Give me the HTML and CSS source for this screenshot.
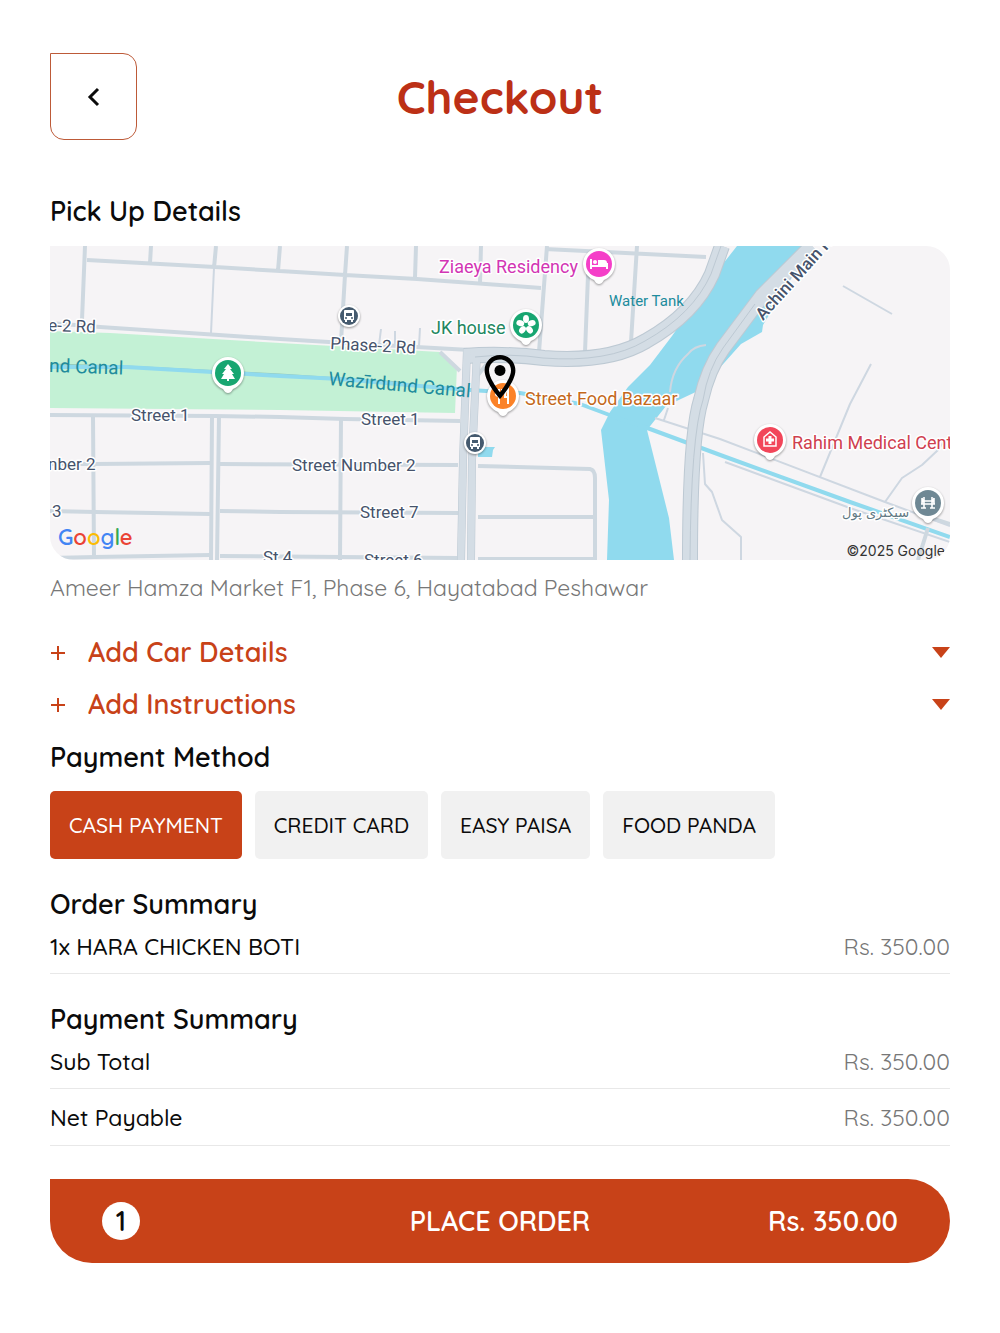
FILE: index.html
```
<!DOCTYPE html>
<html lang="en">
<head>
    <meta charset="UTF-8">
    <meta name="viewport" content="width=device-width, initial-scale=1.0">
    <title>Checkout</title>
    <link rel="stylesheet" href="styles.css">
</head>
<body>

    <header class="header">
        <button class="back-btn" type="button" aria-label="Back">
            <svg width="14" height="20" viewBox="0 0 14 20"><path d="M11 2L3 10l8 8"/></svg>
        </button>
        <h1>Checkout</h1>
    </header>

    <main>
        <section class="pickup">
            <h2>Pick Up Details</h2>

            <svg class="map" viewBox="50 246 900 314" role="img" aria-label="Pick up location">
                <defs>
                    <path id="pin" d="M0 20c-2 0-3-1-5-4-2-1-11-5-11-16a16 16 0 0 1 32 0c0 11-9 15-11 16-2 3-3 4-5 4z"/>
                    <g id="bus">
                        <circle class="marker" r="11"/>
                        <circle r="9" fill="#455a6e"/>
                        <path d="M-5-5q0-1 1-1h8q1 0 1 1v9h-1v2h-2v-2h-4v2h-2v-2h-1z" fill="#fff"/>
                        <path d="M-3-3h6v3h-6z" fill="#455a6e"/>
                        <circle cx="-3" cy="2" r="1" fill="#455a6e"/>
                        <circle cx="3" cy="2" r="1" fill="#455a6e"/>
                    </g>
                </defs>

                <!-- land and water -->
                <path class="land" d="M50 246h900v314H50z"/>
                <path class="park" d="M50 331l60 2 170 10 160 9 17 14-2 47-175-3-230-2z"/>
                <path class="water" d="M737 246h74l-48 79-1 7-21 12-41 46-34 16-19 24 22 88 5 42h-67l2-60-8-70 9-18 18-25 22-22 22-29 43-62z"/>
                <path class="water" d="M478 447h17l-2 3-1 7h-14z"/>
                <path class="canal-edge" d="M50 364l76 2 154 8 120 8"/>
                <path class="canal" d="M50 367h76l154 9 60 3 80 7 50 4 50 3 60 11 35 13 35 12 73 27 127 46 100 35"/>
                <path class="lane" d="M725 462l125 46 100 34"/>

                <!-- streets -->
                <g class="street">
                    <path d="M85 246l-3 74M87 260l128 7 65 4 65 4 72 4 124 9M151 246l-1 17M216 246l-2 22M280 246l-2 25M347 246l-2 29-4 67M416 246l-1 32M481 246l-1 37"/>
                    <path d="M547 246l-8 106M545 249l161 8M589 250l-4 102M637 246l-6 96"/>
                    <path d="M50 323l50 4 180 12 65 4 125 7"/>
                    <path d="M50 415l165 1 65 1 65 2 115 2M50 464h44l116-1M220 464l238 1M50 511l45 1 115 2M220 511l60 1 178 1M50 558l45-1 115-2M220 556l238 2"/>
                    <path d="M93 416l1 142M212 416l-1 144M219 416l-2 144M341 418l-1 142"/>
                    <path d="M478 466l112 3q5 1 5 9v82M478 517h117M478 559h117"/>
                    <path d="M925 516l25 8M928 528l-10 32M440 352l20 19M494 355l-16 20"/>
                </g>
                <g class="lane">
                    <path d="M214 268l-3 65M381 329l-2 16M395 331v16M420 328l-1 18"/>
                    <path d="M843 286l49 28M871 364l-21 40-30 73M655 418l65 21 165 63 65 24M668 408l-4 12M885 502l17-24 20-13 16-15 7-10"/>
                    <path d="M703 453l2 31 7 8 10 28 19 17v23M706 345q-12 1-18 9-16 14-18 38"/>
                </g>

                <!-- main roads -->
                <g class="road-edge">
                    <path d="M464 356q40-3 80 2 65 5 102-17 48-27 66-67l10-28"/>
                    <path d="M467 350l-4 110-2 100M477 352l-5 108-1 100"/>
                    <path d="M812 246l-50 50-39 52q-15 21-22 52-11 35-11 160"/>
                </g>
                <g class="road">
                    <path d="M464 356q40-3 80 2 65 5 102-17 48-27 66-67l10-28"/>
                    <path d="M467 350l-4 110-2 100M477 352l-5 108-1 100"/>
                    <path d="M812 246l-50 50-39 52q-15 21-22 52-11 35-11 160"/>
                </g>
                <path class="divider" d="M475 357q36-4 68 1 65 5 102-17 48-27 66-67l10-28M755 304l-32 44q-15 21-20 52-12 35-13 160"/>

                <!-- street names -->
                <g class="street-name">
                    <text x="48" y="331" transform="rotate(2 48 331)">e-2 Rd</text>
                    <text x="330" y="349" transform="rotate(3 330 349)">Phase-2 Rd</text>
                    <text x="131" y="421">Street 1</text>
                    <text x="361" y="425">Street 1</text>
                    <text x="292" y="471">Street Number 2</text>
                    <text x="48" y="470">nber 2</text>
                    <text x="52" y="517">3</text>
                    <text x="360" y="518">Street 7</text>
                    <text x="263" y="563">St 4</text>
                    <text x="364" y="566">Street 6</text>
                    <text class="main" x="763" y="321" transform="rotate(-48 763 321)">Achini Main Rd</text>
                </g>
                <g class="water-name">
                    <text x="49" y="372" transform="rotate(2 49 372)">nd Canal</text>
                    <text x="328" y="385" transform="rotate(5 328 385)">Wazīrdund Canal</text>
                    <text class="small" x="609" y="306">Water Tank</text>
                </g>

                <!-- places -->
                <g class="place-name">
                    <text x="439" y="273" fill="#d235b4">Ziaeya Residency</text>
                    <text x="431" y="334" fill="#22875f">JK house</text>
                    <text x="525" y="405" fill="#c4691c">Street Food Bazaar</text>
                    <text x="792" y="449" fill="#cf404f">Rahim Medical Center</text>
                    <text class="urdu" x="842" y="517" fill="#607883">سیکٹری پول</text>
                </g>

                <g transform="translate(228 373)">
                    <use class="marker" href="#pin"/>
                    <circle r="13" fill="#18a671"/>
                    <path d="M0-9l4 5h-2l4 5h-2l3 5h-6v2h-2v-2h-6l3-5h-2l4-5h-2z" fill="#fff"/>
                </g>
                <g transform="translate(526 325)">
                    <use class="marker" href="#pin"/>
                    <circle r="13" fill="#18a671"/>
                    <g fill="#fff">
                        <ellipse cy="-6" rx="3" ry="4"/>
                        <ellipse cy="-6" rx="3" ry="4" transform="rotate(72)"/>
                        <ellipse cy="-6" rx="3" ry="4" transform="rotate(144)"/>
                        <ellipse cy="-6" rx="3" ry="4" transform="rotate(216)"/>
                        <ellipse cy="-6" rx="3" ry="4" transform="rotate(288)"/>
                    </g>
                </g>
                <g transform="translate(599 264)">
                    <use class="marker" href="#pin"/>
                    <circle r="13" fill="#f53fc8"/>
                    <path d="M-8-5v10M-8 2h16M8 5v-6" stroke="#fff" stroke-width="2" fill="none"/>
                    <circle cx="-4" cy="-2" r="2" fill="#fff"/>
                    <path d="M-1-4h6q3 0 3 3v2h-9z" fill="#fff"/>
                </g>
                <g transform="translate(770 440)">
                    <use class="marker" href="#pin"/>
                    <circle r="13" fill="#f2465a"/>
                    <path d="M-6 6v-9l6-5 6 5v9z" stroke="#fff" stroke-width="1.5" fill="none"/>
                    <path d="M0-4v8M-4 0h8" stroke="#fff" stroke-width="3"/>
                </g>
                <g transform="translate(928 503)">
                    <use class="marker" href="#pin"/>
                    <circle r="13" fill="#6f8894"/>
                    <path d="M-4-6v11M4-6v11M-7 1h14M-7 5h5M2 5h5M-6-5q1 4 2 4M6-5q-1 4-2 4M-4-2h8M-6-5v6M6-5v6" stroke="#fff" stroke-width="1.6" fill="none"/>
                </g>
                <g transform="translate(503 396)">
                    <use class="marker" href="#pin"/>
                    <circle r="13" fill="#fb8228"/>
                    <path d="M-4-7v15M-7-7v5q0 2 3 2t3-2v-5M5 8v-15q-3 2-3 8h3" stroke="#fff" stroke-width="2" fill="none"/>
                </g>
                <use href="#bus" x="349" y="316"/>
                <use href="#bus" x="475" y="443"/>

                <!-- selected location -->
                <g transform="translate(473.6 350.6) scale(2.2)">
                    <path d="M12 2C8.1 2 5 5.1 5 9c0 5.3 7 13 7 13s7-7.7 7-13c0-3.9-3.1-7-7-7zM7 9c0-2.800 2.200-5 5-5s5 2.200 5 5c0 2.900-2.900 7.200-5 9.900C9.900 16.200 7 11.900 7 9z"/>
                    <circle cx="12" cy="9" r="2.500"/>
                </g>

                <text class="logo" x="58" y="545"><tspan fill="#4285f4">G</tspan><tspan fill="#ea4335">o</tspan><tspan fill="#fbbc05">o</tspan><tspan fill="#4285f4">g</tspan><tspan fill="#34a853">l</tspan><tspan fill="#ea4335">e</tspan></text>
                <text class="copyright" x="945" y="556">©2025 Google</text>
            </svg>

            <p class="address">Ameer Hamza Market F1, Phase 6, Hayatabad Peshawar</p>
        </section>

        <section class="extras">
            <button class="toggle" type="button" aria-expanded="false">
                <svg class="plus" width="16" height="16" viewBox="0 0 16 16"><path d="M8 2v14M1 9h14"/></svg>
                <span>Add Car Details</span>
                <svg class="caret" width="18" height="11" viewBox="0 0 18 11"><path d="M0 0h18L9 11z"/></svg>
            </button>
            <button class="toggle" type="button" aria-expanded="false">
                <svg class="plus" width="16" height="16" viewBox="0 0 16 16"><path d="M8 2v14M1 9h14"/></svg>
                <span>Add Instructions</span>
                <svg class="caret" width="18" height="11" viewBox="0 0 18 11"><path d="M0 0h18L9 11z"/></svg>
            </button>
        </section>

        <section class="payment">
            <h2>Payment Method</h2>
            <div class="methods">
                <button class="method active" type="button">CASH PAYMENT</button>
                <button class="method" type="button">CREDIT CARD</button>
                <button class="method" type="button">EASY PAISA</button>
                <button class="method" type="button">FOOD PANDA</button>
            </div>
        </section>

        <section class="summary">
            <h2>Order Summary</h2>
            <div class="row"><span>1x HARA CHICKEN BOTI</span><span class="price">Rs. 350.00</span></div>
        </section>

        <section class="summary">
            <h2>Payment Summary</h2>
            <div class="row"><span>Sub Total</span><span class="price">Rs. 350.00</span></div>
            <div class="row"><span>Net Payable</span><span class="price">Rs. 350.00</span></div>
        </section>

        <button class="place-order" type="button">
            <span class="count">1</span>
            <span>PLACE ORDER</span>
            <span class="total">Rs. 350.00</span>
        </button>
    </main>

</body>
</html>
```
FILE: styles.css
```
* {
    box-sizing: border-box;
}
body {
    font-family: Quicksand, Lato, sans-serif;
    margin: 0;
    padding: 53px 50px 70px;
    background-color: #fff;
    color: #0b0b0b;
}
button {
    font-family: inherit;
    border: none;
    cursor: pointer;
}
h1, h2, p {
    margin: 0;
}
.header {
    display: grid;
    grid-template-columns: 1fr auto 1fr;
    align-items: center;
}
.back-btn {
    display: flex;
    align-items: center;
    justify-content: center;
    width: 87px;
    height: 87px;
    background-color: #fff;
    border: 1px solid #bd5a38;
    border-radius: 0 14px 14px 14px;
}
.back-btn path {
    fill: none;
    stroke: #0b0b0b;
    stroke-width: 3;
}
h1 {
    color: #bc3016;
    font-size: 46px;
    line-height: 60px;
    font-weight: bold;
}
h2 {
    font-size: 27px;
    line-height: 36px;
    font-weight: 600;
}
.pickup {
    margin-top: 53px;
}

/* map */
.map {
    display: block;
    width: 100%;
    margin-top: 17px;
    border-radius: 0 24px 24px 24px;
}
.land {
    fill: #f6f4f6;
}
.park {
    fill: #c3f1d5;
}
.water {
    fill: #90daee;
}
.canal, .canal-edge, .street, .lane, .road, .road-edge, .divider {
    fill: none;
    stroke-linejoin: round;
}
.canal {
    stroke: #90daee;
    stroke-width: 4;
}
.canal-edge {
    stroke: #93c9bd;
    stroke-width: 1;
}
.street {
    stroke: #ced8e0;
    stroke-width: 4;
}
.lane {
    stroke: #ced7e1;
    stroke-width: 2;
}
.road-edge {
    stroke: #bdc9d3;
    stroke-width: 16;
}
.road {
    stroke: #d4dde5;
    stroke-width: 14;
}
.road-edge path:nth-child(2) {
    stroke-width: 8;
}
.road path:nth-child(2) {
    stroke-width: 7;
}
.divider {
    stroke: #bdc9d3;
    stroke-width: 1;
}
.street-name, .water-name, .place-name {
    font-family: Roboto, sans-serif;
    font-size: 17px;
    paint-order: stroke;
    stroke: #fff;
    stroke-width: 3;
    stroke-linejoin: round;
}
.street-name {
    fill: #46536b;
}
.street-name .main {
    font-weight: 500;
}
.water-name {
    font-size: 19px;
    fill: #208b9c;
    stroke: none;
}
.water-name .small {
    font-size: 15px;
}
.place-name {
    font-size: 18px;
}
.place-name .urdu {
    font-family: "DejaVu Sans", sans-serif;
    font-size: 13px;
}
.marker {
    fill: #fff;
    filter: drop-shadow(0 1px 1px rgba(0, 0, 0, 0.4));
}
.logo {
    font-size: 22px;
    font-weight: 600;
}
.copyright {
    font-family: Inter, sans-serif;
    font-size: 14px;
    text-anchor: end;
    fill: #333;
}
.address {
    margin-top: 12px;
    font-size: 23px;
    line-height: 32px;
    color: #777;
}

/* car details and instructions */
.extras {
    margin-top: 23px;
}
.toggle {
    display: flex;
    align-items: center;
    width: 100%;
    height: 52px;
    padding: 0 0 2px;
    background: none;
    color: #c84218;
    font-size: 27px;
    font-weight: 600;
}
.plus {
    margin-right: 22px;
    fill: none;
    stroke: #c84218;
    stroke-width: 2;
}
.caret {
    margin-left: auto;
    fill: #c84218;
}

/* payment method */
.payment {
    margin-top: 8px;
}
.methods {
    display: flex;
    flex-wrap: wrap;
    gap: 13px;
    margin-top: 16px;
}
.method {
    height: 68px;
    padding: 0 19px;
    background-color: #f1f1f1;
    border-radius: 5px;
    color: #0b0b0b;
    font-size: 21px;
    font-weight: 500;
}
.method.active {
    background-color: #c84218;
    color: #fff;
}

/* totals */
.summary {
    margin-top: 27px;
}
.row {
    display: flex;
    align-items: center;
    justify-content: space-between;
    height: 57px;
    border-bottom: 1px solid #e8e8e8;
    font-size: 23px;
    font-weight: 500;
}
h2 + .row {
    height: 52px;
    padding-bottom: 3px;
}
.price {
    color: #777;
    font-weight: 400;
}
.place-order {
    display: grid;
    grid-template-columns: 1fr auto 1fr;
    align-items: center;
    width: 100%;
    height: 84px;
    margin-top: 33px;
    padding: 0 52px;
    background-color: #c84218;
    border-radius: 0 42px 42px 42px;
    color: #fff;
    font-size: 27px;
    font-weight: 600;
}
.count {
    width: 38px;
    height: 38px;
    border-radius: 50%;
    background-color: #fff;
    color: #0b0b0b;
    line-height: 38px;
}
.total {
    text-align: right;
}
```
